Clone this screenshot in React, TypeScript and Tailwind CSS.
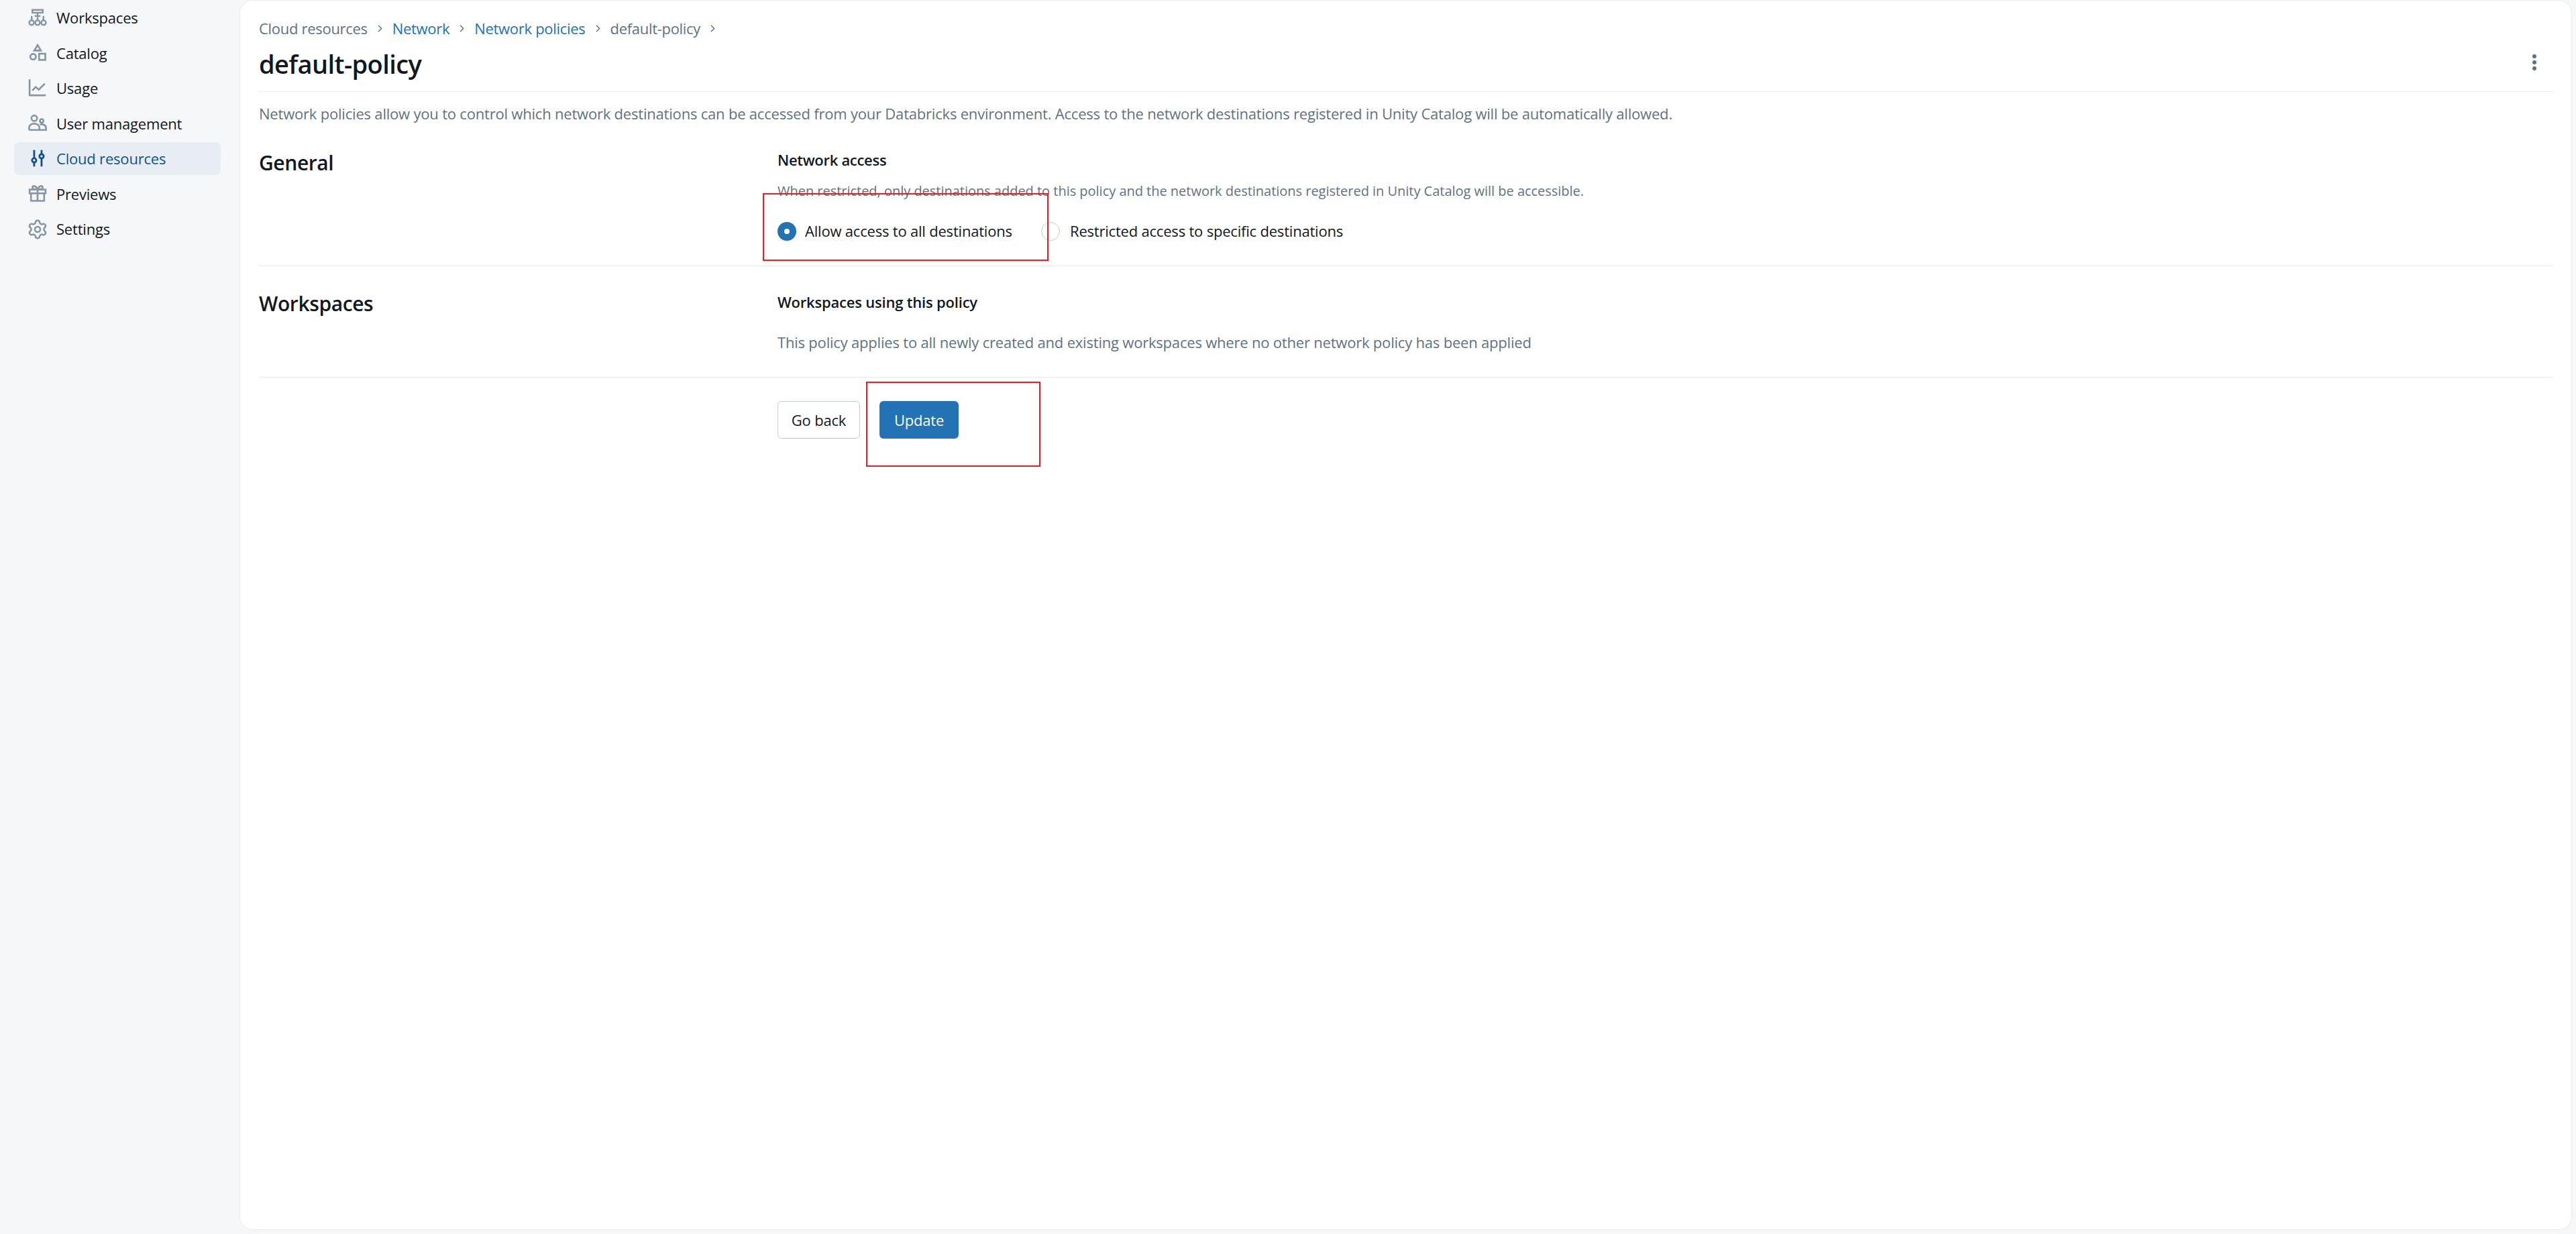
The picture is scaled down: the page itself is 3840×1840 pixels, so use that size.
import { ChevronRight, Settings } from "lucide-react";
import type { ReactNode } from "react";

const iconClass = "h-7 w-7 shrink-0";

function WorkspacesIcon() {
  return (
    <svg viewBox="0 0 16 16" className={iconClass} fill="none" stroke="currentColor" strokeWidth="1.4">
      <rect x="3.6" y="1" width="8.8" height="2.4" />
      <path d="M8 3.4V9.5M5.5 6.2h5M3 6.2V9.5M13 6.2V9.5" />
      <circle cx="2.9" cy="11.9" r="2" />
      <circle cx="8" cy="11.9" r="2" />
      <circle cx="13.1" cy="11.9" r="2" />
    </svg>
  );
}

function CatalogIcon() {
  return (
    <svg viewBox="0 0 16 16" className={iconClass} fill="none" stroke="currentColor" strokeWidth="1.5">
      <path d="M8 1.3 10.8 5.9H5.2Z" />
      <circle cx="4.2" cy="11.2" r="2.4" />
      <rect x="9.3" y="8.6" width="5.3" height="5.3" />
    </svg>
  );
}

function UsageIcon() {
  return (
    <svg viewBox="0 0 16 16" className={iconClass} fill="none" stroke="currentColor" strokeWidth="1.5">
      <path d="M1.2 0.2V13.8H15" />
      <path d="M3.6 9.6 6.4 6.6 9 9 14.2 3.8" />
    </svg>
  );
}

function UsersIcon() {
  return (
    <svg viewBox="0 0 16 16" className={iconClass} fill="none" stroke="currentColor" strokeWidth="1.5">
      <circle cx="5.2" cy="3.6" r="2.4" />
      <circle cx="11.5" cy="5.8" r="1.5" />
      <path d="M0.8 13.6V11.6C0.8 9.4 3 8.2 5.2 8.2C7.4 8.2 9.6 9.6 9.6 11.6V13.6" />
      <path d="M10 9C12.5 8.2 15.2 9.6 15.2 11.8V13.6H0.8" />
    </svg>
  );
}

function SlidersIcon() {
  return (
    <svg viewBox="0 0 16 16" className={iconClass} fill="none" stroke="currentColor" strokeWidth="1.6">
      <path d="M5.1 0.4V7.2M5.1 11.2V14.4M11.4 0.4V3.8M11.4 7.6V14.4" />
      <circle cx="5.1" cy="9.2" r="1.8" />
      <circle cx="11.4" cy="5.7" r="1.8" />
    </svg>
  );
}

function GiftIcon() {
  return (
    <svg viewBox="0 0 16 16" className={iconClass} fill="none" stroke="currentColor" strokeWidth="1.5">
      <rect x="1.2" y="4.4" width="13.6" height="3.2" />
      <path d="M2.4 7.6V14H13.6V7.6M8 4.4V14" />
      <path d="M8 4.4C6.8 1.2 3.6 0.4 3.6 2.6C3.6 3.8 5 4.4 8 4.4C11 4.4 12.4 3.8 12.4 2.6C12.4 0.4 9.2 1.2 8 4.4Z" />
    </svg>
  );
}

const navItems: { label: string; icon: ReactNode; active?: boolean }[] = [
  { label: "Workspaces", icon: <WorkspacesIcon /> },
  { label: "Catalog", icon: <CatalogIcon /> },
  { label: "Usage", icon: <UsageIcon /> },
  { label: "User management", icon: <UsersIcon /> },
  { label: "Cloud resources", icon: <SlidersIcon />, active: true },
  { label: "Previews", icon: <GiftIcon /> },
  { label: "Settings", icon: <Settings className="-mx-[2px] -my-[2px] h-8 w-8" strokeWidth={1.9} /> },
];

function Crumb() {
  return <ChevronRight className="mx-[10px] h-[17px] w-[17px] text-[#5f7281]" strokeWidth={2} />;
}

export default function App() {
  return (
    <div className="flex h-screen bg-[#f6f7f9] pr-[6px] pb-[6px] font-['Open_Sans','Noto_Sans',sans-serif] text-[22px] tracking-[-0.2px] text-[#11171c]">
      {/* Sidebar */}
      <nav className="w-[357px] shrink-0 pt-[2px] pr-[28px] pl-[21px]">
        <ul className="flex flex-col gap-[3.5px]">
          {navItems.map((item) => (
            <li
              key={item.label}
              className={`flex h-[49px] items-center gap-[14px] rounded-lg pl-[21px] ${
                item.active ? "bg-[#e8edf3] text-[#0e538b]" : ""
              }`}
            >
              <span className={item.active ? "text-[#0e538b]" : "text-[#8696a3]"}>{item.icon}</span>
              <span>{item.label}</span>
            </li>
          ))}
        </ul>
      </nav>

      {/* Main card */}
      <main className="relative flex-1 rounded-[20px] border border-[#e8ecf0] bg-white pt-[25px] pr-[27px] pl-[28px]">
        <div className="flex h-[32px] items-center tracking-[-0.3px] text-[#5f7281]">
          <span>Cloud resources</span>
          <Crumb />
          <span className="text-[#2272b4]">Network</span>
          <Crumb />
          <span className="text-[#2272b4]">Network policies</span>
          <Crumb />
          <span>default-policy</span>
          <Crumb />
        </div>

        <div className="flex h-[79px] items-center justify-between border-b border-[#e8ecf0] pb-[3px]">
          <h1 className="text-[38px] font-semibold tracking-[-0.6px]">default-policy</h1>
          <div className="mr-[25px] mb-[5px] flex flex-col gap-[3px]">
            <span className="h-[6px] w-[6px] rounded-full bg-[#5f7281]" />
            <span className="h-[6px] w-[6px] rounded-full bg-[#5f7281]" />
            <span className="h-[6px] w-[6px] rounded-full bg-[#5f7281]" />
          </div>
        </div>

        <p className="mt-[16px] text-[#5f7281]">
          Network policies allow you to control which network destinations can be accessed from your Databricks
          environment. Access to the network destinations registered in Unity Catalog will be automatically allowed.
        </p>

        {/* General */}
        <section className="mt-[34px] grid h-[177px] grid-cols-[773px_1fr] border-b border-[#e8ecf0]">
          <h2 className="text-[30px] font-semibold tracking-[-0.4px]">General</h2>
          <div>
            <div className="pt-[2px] font-semibold tracking-[-0.3px]">Network access</div>
            <p className="mt-[15px] text-[20px] tracking-[-0.02px] text-[#5f7281]">
              When restricted, only destinations added to this policy and the network destinations registered in Unity
              Catalog will be accessible.
            </p>
            <div className="mt-[28px] flex items-center">
              <span className="flex h-[28px] w-[28px] items-center justify-center rounded-full bg-[#2272b4]">
                <span className="h-[8px] w-[8px] rounded-full bg-white" />
              </span>
              <span className="ml-[13px] w-[352px]">Allow access to all destinations</span>
              <span className="h-[28px] w-[28px] rounded-full border border-[#c0cdd8]" />
              <span className="ml-[15px]">Restricted access to specific destinations</span>
            </div>
          </div>
        </section>

        {/* Workspaces */}
        <section className="grid h-[166px] grid-cols-[773px_1fr] border-b border-[#e8ecf0] pt-[37px]">
          <h2 className="-mt-[4px] text-[30px] font-semibold tracking-[-0.4px]">Workspaces</h2>
          <div>
            <div className="font-semibold">Workspaces using this policy</div>
            <p className="mt-[27px] text-[#5f7281]">
              This policy applies to all newly created and existing workspaces where no other network policy has been
              applied
            </p>
          </div>
        </section>

        {/* Actions */}
        <div className="mt-[35px] ml-[773px] flex gap-[29px]">
          <button className="h-[56px] w-[123px] rounded-md border border-[#c0cdd8] bg-white">Go back</button>
          <button className="h-[56px] w-[118px] rounded-md bg-[#2272b4] text-white">Update</button>
        </div>

        {/* Red annotation boxes */}
        <div className="absolute top-[287px] left-[779px] h-[101px] w-[426px] border-2 border-[#ed1c24]" />
        <div className="absolute top-[568px] left-[933px] h-[127px] w-[260px] border-2 border-[#ed1c24]" />
      </main>
    </div>
  );
}
